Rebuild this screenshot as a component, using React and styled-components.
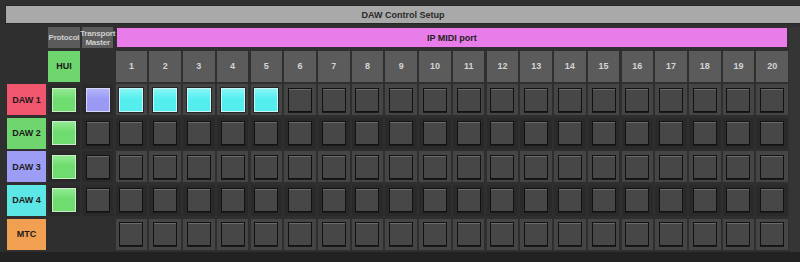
import styled, { createGlobalStyle } from "styled-components";

const GlobalStyle = createGlobalStyle`
  html, body {
    margin: 0;
    padding: 0;
    background-color: #2f2f2f;
    font-family: "Liberation Sans", Arial, sans-serif;
  }
`;

const Page = styled.div`
  width: 800px;
  height: 262px;
  display: flex;
  flex-direction: column;
  background-color: #2f2f2f;
  overflow: hidden;
`;

const TitleBar = styled.div`
  margin: 5px 0 0 5px;
  height: 17px;
  background-color: #a9a9a9;
  border: 1px solid #262626;
  border-right: none;
  display: flex;
  align-items: center;
  justify-content: center;
  font-size: 9px;
  font-weight: bold;
  color: #2a2a2a;
`;

const Body = styled.div`
  flex: 1;
  display: flex;
  padding-top: 3px;
`;

const Grid = styled.div`
  margin-left: 7px;
  width: 781px;
  display: grid;
  grid-template-columns: 39px repeat(22, minmax(0, 1fr));
  grid-template-rows: 21px repeat(6, 31px);
  column-gap: 2.2px;
  row-gap: 2.6px;
`;

const Rail = styled.div`
  margin-left: 1px;
  flex: 1;
  background-color: #353535;
`;

const Footer = styled.div`
  height: 10px;
  background-color: #222;
`;

const HeadCell = styled.div`
  background-color: #5b5b5b;
  color: #cfcfcf;
  font-size: 8px;
  font-weight: bold;
  line-height: 9px;
  letter-spacing: -0.2px;
  text-align: center;
  white-space: nowrap;
  display: flex;
  align-items: center;
  justify-content: center;
`;

const PortBar = styled.div`
  grid-column: span 20;
  background-color: #e87ce8;
  border: 1px solid #3a2a3a;
  color: #222;
  font-size: 9px;
  font-weight: bold;
  display: flex;
  align-items: center;
  justify-content: center;
`;

const NumberCell = styled.div`
  background-color: #5b5b5b;
  color: #d4d4d4;
  font-size: 9px;
  font-weight: bold;
  display: flex;
  align-items: center;
  justify-content: center;
`;

const Label = styled.div`
  background-color: ${(p) => p.$color};
  color: #1b1b1b;
  font-size: 9px;
  font-weight: bold;
  display: flex;
  align-items: center;
  justify-content: center;
`;

const Empty = styled.div``;

const Slot = styled.div`
  background-color: ${(p) => (p.$light ? "#454545" : "#2a2a2a")};
  display: flex;
  align-items: center;
  justify-content: center;
`;

const Pad = styled.div`
  width: 24px;
  height: 24px;
  box-sizing: border-box;
  background: ${(p) =>
    p.$color
      ? `linear-gradient(${p.$top}, ${p.$color} 45%)`
      : "#474747"};
  border: 1px solid ${(p) => (p.$color ? p.$edge : "#121212")};
  box-shadow: ${(p) =>
    p.$color
      ? "0 0 0 1px #262626"
      : "inset 0 1px 0 #6b6b6b, 0 1px 0 #1a1a1a"};
`;

const pads = {
  green: { $color: "#6fdc6f", $top: "#92ea92", $edge: "#c9efc9" },
  purple: { $color: "#9a9af5", $top: "#b4b4fa", $edge: "#d6d6fb" },
  cyan: { $color: "#55eeee", $top: "#88f6f6", $edge: "#c9f6f6" },
};

const rows = [
  { name: "DAW 1", color: "#f0566e", transport: "purple", lit: 5 },
  { name: "DAW 2", color: "#6fd66f", lit: 0 },
  { name: "DAW 3", color: "#9d9df5", lit: 0 },
  { name: "DAW 4", color: "#5de6e6", lit: 0 },
];

const ports = Array.from({ length: 20 }, (_, i) => i + 1);

const App = () => {
  return (
    <Page>
      <GlobalStyle />
      <TitleBar>DAW Control Setup</TitleBar>
      <Body>
        <Grid>
          <Empty />
          <HeadCell>Protocol</HeadCell>
          <HeadCell>
            Transport
            <br />
            Master
          </HeadCell>
          <PortBar>IP MIDI port</PortBar>

          <Empty />
          <Label $color="#6fd66f">HUI</Label>
          <Empty />
          {ports.map((n) => (
            <NumberCell key={n}>{n}</NumberCell>
          ))}

          {rows.map((row, r) => {
            const light = r % 2 === 0;
            return [
              <Label key={row.name} $color={row.color}>
                {row.name}
              </Label>,
              <Slot key={row.name + "p"} $light={false}>
                <Pad {...pads.green} />
              </Slot>,
              <Slot key={row.name + "t"} $light={false}>
                <Pad {...(row.transport ? pads[row.transport] : {})} />
              </Slot>,
              ...ports.map((n) => (
                <Slot key={row.name + n} $light={light}>
                  <Pad {...(n <= row.lit ? pads.cyan : {})} />
                </Slot>
              )),
            ];
          })}

          <Label $color="#f0a050">MTC</Label>
          <Empty />
          <Empty />
          {ports.map((n) => (
            <Slot key={"mtc" + n} $light>
              <Pad />
            </Slot>
          ))}
        </Grid>
        <Rail />
      </Body>
      <Footer />
    </Page>
  );
};

export default App;
